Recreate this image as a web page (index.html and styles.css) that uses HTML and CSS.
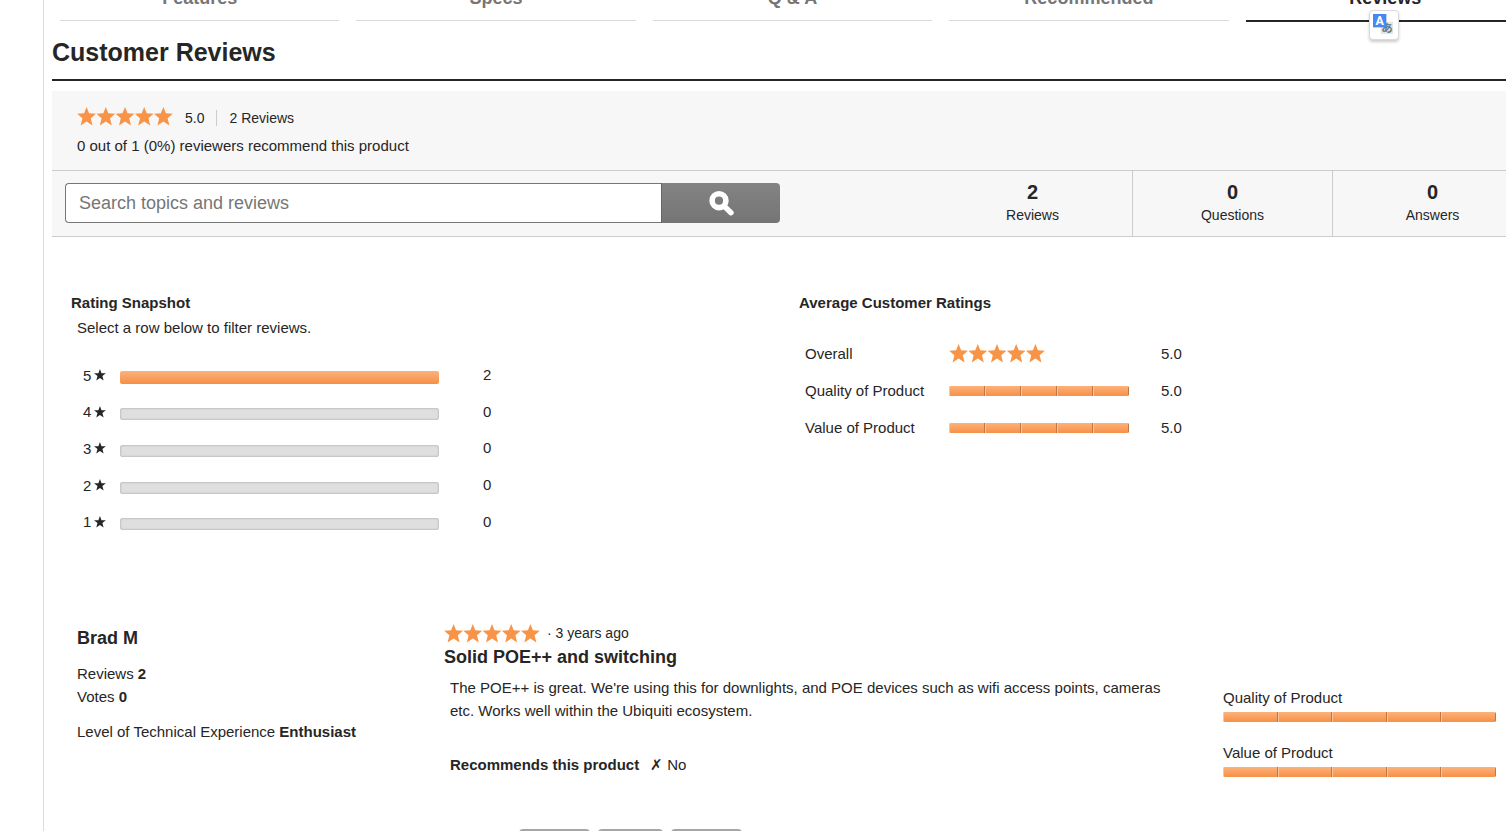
FILE: index.html
```html
<!DOCTYPE html>
<html lang="en">
<head>
<meta charset="utf-8">
<title>Customer Reviews</title>
<link rel="stylesheet" href="styles.css">
</head>
<body>
<svg class="defs" aria-hidden="true">
  <symbol id="stars" viewBox="0 0 96 19">
    <g id="row">
      <path id="star" d="M9.6 0 12.1 6.3 19 6.7 13.8 11.2 15.6 18.6 9.6 14.6 3.6 18.6 5.4 11.2 .2 6.7 7.1 6.3Z"/>
      <use href="#star" x="19.2"/><use href="#star" x="38.4"/><use href="#star" x="57.6"/><use href="#star" x="76.8"/>
    </g>
  </symbol>
  <symbol id="one-star" viewBox="0 0 19 19">
    <path d="M9.4 0 11.8 6.6 18.8 6.8 13.3 11.2 15.2 18.3 9.4 14.3 3.6 18.3 5.5 11.2 0 6.8 7 6.6Z"/>
  </symbol>
</svg>

<div class="page">
  <nav class="tabs">
    <a class="tab" href="#features">Features</a>
    <a class="tab" href="#specs">Specs</a>
    <a class="tab" href="#qa">Q &amp; A</a>
    <a class="tab" href="#recommended">Recommended</a>
    <a class="tab tab-active" href="#reviews">Reviews
      <span class="translate">
        <svg viewBox="0 0 22 22" aria-hidden="true">
          <rect x="8" y="8" width="13" height="13" rx="1" fill="#e3e5e7"/>
          <text class="glyph-ja" x="9" y="19" transform="rotate(8 15 15)">あ</text>
          <rect width="14" height="14" fill="#4688f1"/>
          <text class="glyph-en" x="7" y="12">A</text>
        </svg>
      </span>
    </a>
  </nav>

  <main id="reviews">
    <h1>Customer Reviews</h1>

    <section class="summary">
      <div class="overview">
        <div class="score">
          <svg class="stars" role="img" aria-label="5 out of 5 stars"><use href="#stars"/></svg>
          <span class="score-value">5.0</span>
          <a class="score-count" href="#list">2 Reviews</a>
        </div>
        <p>0 out of 1 (0%) reviewers recommend this product</p>
      </div>
      <div class="toolbar">
        <form class="search">
          <input type="search" placeholder="Search topics and reviews" aria-label="Search topics and reviews">
          <button type="button" aria-label="Search">
            <svg viewBox="0 0 25 25" aria-hidden="true">
              <circle cx="10" cy="9.7" r="6.9" fill="none" stroke="#fff" stroke-width="5.6"/>
              <path d="M15.5 15.5 22 21.7" stroke="#fff" stroke-width="5.4" stroke-linecap="round"/>
            </svg>
          </button>
        </form>
        <div class="stats">
          <div class="stat"><strong>2</strong><span>Reviews</span></div>
          <div class="stat"><strong>0</strong><span>Questions</span></div>
          <div class="stat"><strong>0</strong><span>Answers</span></div>
        </div>
      </div>
    </section>

    <div class="ratings">
      <section>
        <h2>Rating Snapshot</h2>
        <p class="hint">Select a row below to filter reviews.</p>
        <div class="histogram">
          <button type="button" class="bar-row"><span class="bar-label">5<svg><use href="#one-star"/></svg></span><span class="bar bar-full"></span><span class="bar-count">2</span></button>
          <button type="button" class="bar-row"><span class="bar-label">4<svg><use href="#one-star"/></svg></span><span class="bar"></span><span class="bar-count">0</span></button>
          <button type="button" class="bar-row"><span class="bar-label">3<svg><use href="#one-star"/></svg></span><span class="bar"></span><span class="bar-count">0</span></button>
          <button type="button" class="bar-row"><span class="bar-label">2<svg><use href="#one-star"/></svg></span><span class="bar"></span><span class="bar-count">0</span></button>
          <button type="button" class="bar-row"><span class="bar-label">1<svg><use href="#one-star"/></svg></span><span class="bar"></span><span class="bar-count">0</span></button>
        </div>
      </section>
      <section>
        <h2>Average Customer Ratings</h2>
        <table class="averages">
          <tr><th scope="row">Overall</th><td class="meter-cell"><svg class="stars" role="img" aria-label="5 out of 5 stars"><use href="#stars"/></svg></td><td>5.0</td></tr>
          <tr><th scope="row">Quality of Product</th><td class="meter-cell"><div class="meter"><i></i><i></i><i></i><i></i><i></i></div></td><td>5.0</td></tr>
          <tr><th scope="row">Value of Product</th><td class="meter-cell"><div class="meter"><i></i><i></i><i></i><i></i><i></i></div></td><td>5.0</td></tr>
        </table>
      </section>
    </div>

    <article class="review" id="list">
      <div class="author">
        <h3>Brad M</h3>
        <p>Reviews <b>2</b></p>
        <p>Votes <b>0</b></p>
        <p class="level">Level of Technical Experience <b>Enthusiast</b></p>
      </div>
      <div class="content">
        <div class="meta">
          <svg class="stars" role="img" aria-label="5 out of 5 stars"><use href="#stars"/></svg>
          <span>· 3 years ago</span>
        </div>
        <h3>Solid POE++ and switching</h3>
        <p class="text">The POE++ is great. We're using this for downlights, and POE devices such as wifi access points, cameras etc. Works well within the Ubiquiti ecosystem.</p>
        <p class="recommends"><b>Recommends this product</b><span class="cross">✗</span>No</p>
        <div class="feedback">
          <button type="button" class="wide" aria-label="Yes"></button>
          <button type="button" aria-label="No"></button>
          <button type="button" class="wide" aria-label="Report"></button>
        </div>
      </div>
      <div class="secondary">
        <div class="secondary-item"><span>Quality of Product</span><div class="meter"><i></i><i></i><i></i><i></i><i></i></div></div>
        <div class="secondary-item"><span>Value of Product</span><div class="meter"><i></i><i></i><i></i><i></i><i></i></div></div>
      </div>
    </article>
  </main>
</div>
</body>
</html>
```

FILE: styles.css
```css
* { box-sizing: border-box; }

body {
  margin: 0;
  height: 100vh;
  overflow: hidden;
  background: #fff;
  color: #262626;
  font: 15px/23px "Liberation Sans", Arial, sans-serif;
}

h1, h2, h3, p { margin: 0; }
a { color: inherit; text-decoration: none; }
button { font: inherit; color: inherit; }
.defs { position: absolute; width: 0; height: 0; }

/* The product column runs slightly past the right edge of the window. */
.page {
  margin: 0 -26px 0 43px;
  padding-left: 8px;
  min-height: 100vh;
  border-left: 1px solid #dcdcdc;
}

.tabs {
  display: grid;
  grid-template-columns: repeat(5, 1fr);
  gap: 17px;
  margin-top: -12px;
  padding: 0 7px 0 8px;
}
.tab {
  position: relative;
  height: 34px;
  color: #767676;
  font-size: 18px;
  font-weight: bold;
  line-height: 20px;
  text-align: center;
  background: linear-gradient(#d9d9d9, #d9d9d9) 0 32px / 100% 1px no-repeat;
}
.tab-active {
  color: #262626;
  background: linear-gradient(#262626, #262626) 0 32px / 100% 2px no-repeat;
}
.translate {
  position: absolute;
  top: 22px;
  left: 50%;
  width: 30px;
  height: 30px;
  margin-left: -16px;
  padding: 4px;
  border: 1px solid #dadada;
  border-radius: 4px;
  background: #fff;
  box-shadow: 0 2px 3px rgba(0, 0, 0, .2);
  line-height: 0;
}
.translate svg { display: block; width: 21px; height: 21px; margin: -1px; }
.glyph-en { fill: #fff; font: bold 13px Roboto, sans-serif; text-anchor: middle; }
.glyph-ja { fill: #607d8b; font: bold 12px "Noto Sans CJK JP", sans-serif; }

h1 {
  padding: 14px 0 11px;
  border-bottom: 2px solid #262626;
  font-size: 25px;
  line-height: 32px;
}

.summary {
  margin-top: 10px;
  border-bottom: 1px solid #ccc;
  background: #f7f7f7;
}
.overview { padding: 14px 25px 13px; }
.score {
  display: flex;
  height: 24px;
  padding-top: 2px;
  font-size: 14px;
}
.stars { display: block; flex: none; width: 96px; height: 19px; fill: #f79448; }
.score-value {
  margin: 3px 12px 0;
  line-height: 16px;
}
.score-count {
  height: 16px;
  margin-top: 3px;
  padding-left: 12px;
  border-left: 1px solid #ccc;
  line-height: 16px;
}
.overview p { margin-top: 5px; }

.toolbar {
  display: flex;
  justify-content: space-between;
  border-top: 1px solid #ccc;
}
.search {
  display: flex;
  flex: 0 1 728px;
  padding: 12px 0 12px 13px;
}
.search input {
  flex: 1;
  min-width: 0;
  height: 40px;
  padding: 0 13px;
  border: 1px solid #767676;
  border-right: 0;
  border-radius: 4px 0 0 4px;
  background: #fff;
  color: #262626;
  font: 18px "Liberation Sans", Arial, sans-serif;
  appearance: none;
}
.search input::placeholder { color: #767676; opacity: 1; }
.search button {
  display: grid;
  place-items: center;
  width: 119px;
  height: 40px;
  padding: 0;
  border: 0;
  border-left: 1px solid #666;
  border-radius: 0 4px 4px 0;
  background: linear-gradient(#838383, #757575);
}
.search svg { width: 25px; height: 25px; }

.stats {
  display: grid;
  grid-template-columns: repeat(3, 200px);
}
.stat {
  display: flex;
  flex-direction: column;
  padding: 9px 0 10px;
  border-left: 1px solid #ccc;
  text-align: center;
  font-size: 14px;
  line-height: 22px;
}
.stat:first-child { border-left-color: transparent; }
.stat strong { font-size: 20px; line-height: 24px; }

.ratings {
  display: grid;
  grid-template-columns: 1fr 1fr;
  padding: 56px 5px 0 19px;
}
h2 { font-size: 15px; line-height: 20px; }
.hint { margin: 5px 0 0 6px; line-height: 20px; }
.histogram {
  display: grid;
  grid-auto-rows: 1fr;
  height: 183px;
  margin-top: 20px;
  width: 426px;
}
.bar-row {
  display: grid;
  grid-template-columns: 37px 319px 1fr;
  align-items: center;
  padding: 0 6px 0 12px;
  border: 0;
  background: none;
  text-align: left;
}
.bar-label { display: flex; align-items: center; gap: 3px; padding-bottom: 2px; }
.bar-label svg { width: 12px; height: 12px; fill: #262626; }
.bar {
  height: 12px;
  margin-top: 3px;
  border: 1px solid #c9c8c9;
  border-radius: 2px;
  background: #e0dfe0;
  box-shadow: inset 0 0 2px rgba(0, 0, 0, .12);
}
.bar-full {
  height: 13px;
  border: 0;
  background: linear-gradient(#fab27e, #f78f43);
  box-shadow: none;
}
.bar-count { padding: 0 0 3px 44px; }

.averages { margin-top: 21px; border-collapse: collapse; }
.averages tr { height: 37px; }
.averages tr:first-child { height: 38px; }
.averages th {
  width: 150px;
  padding: 0 0 0 6px;
  font-weight: normal;
  text-align: left;
}
.averages td { padding: 0; }
.averages .meter-cell { width: 212px; }
.averages .meter { width: 180px; }

.meter {
  display: flex;
  height: 10px;
  overflow: hidden;
  border-radius: 2px;
  background: linear-gradient(#fbb27c, #f79045);
}
.meter i {
  flex: 1;
  border-left: 1px solid #fcc59c;
  border-right: 1px solid #c27641;
}

.review {
  display: grid;
  grid-template-columns: 367px 1fr 273px;
  padding: 80px 36px 0 25px;
}
h3 { font-size: 18px; line-height: 24px; }
.author { padding-top: 5px; }
.author h3 { margin-bottom: 12px; }
.level { margin-top: 12px; }
.content { padding-right: 45px; }
.meta {
  display: flex;
  align-items: center;
  gap: 7px;
  height: 24px;
  font-size: 14px;
}
.text { margin: 7px 0 0 6px; }
.recommends {
  display: flex;
  margin: 31px 0 0 6px;
  line-height: 24px;
}
.cross { margin: 0 4px 0 11px; }
.feedback { display: flex; gap: 8px; margin: 52px 0 0 75px; }
.feedback button {
  width: 65px;
  height: 30px;
  padding: 0;
  border: 2px solid #a6a6a6;
  border-radius: 4px;
  background: #a6a6a6;
}
.feedback .wide { width: 71px; }
.secondary { padding-top: 65px; }
.secondary-item { height: 55px; }
.secondary-item span { display: block; line-height: 24px; }
.secondary-item .meter { margin-top: 2px; }
```
